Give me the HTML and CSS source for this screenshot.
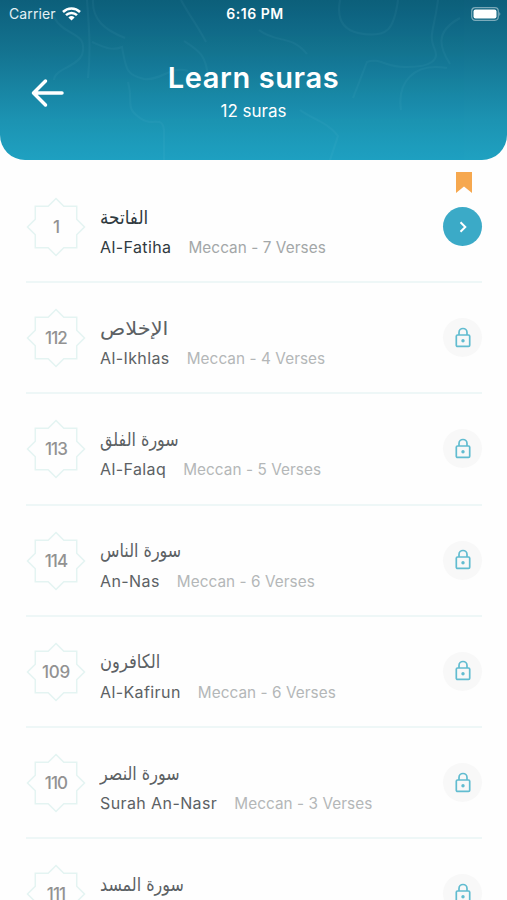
FILE: index.html
```html
<!DOCTYPE html>
<html lang="en">
<head>
<meta charset="utf-8">
<title>Learn suras</title>
<link rel="stylesheet" href="styles.css">
</head>
<body>
<svg class="defs" width="0" height="0" aria-hidden="true">
  <symbol id="star" viewBox="-30 -30 60 60"><path d="M0-28.5 7.8-20.7H20.7V-7.8L28.5 0 20.7 7.8V20.7H7.8L0 28.5-7.8 20.7H-20.7V7.8L-28.5 0-20.7-7.8V-20.7H-7.8Z" fill="none" stroke="currentColor" stroke-width="1.5"/></symbol>
  <symbol id="lock" viewBox="0 0 18 22"><path d="M5 8V5.500a4 4 0 0 1 8 0V8" fill="none" stroke="currentColor" stroke-width="1.7"/><rect x="2.300" y="8" width="13.400" height="11.400" rx="1.200" fill="none" stroke="currentColor" stroke-width="1.700"/><circle cx="9" cy="13.700" r="1.700" fill="currentColor"/></symbol>
</svg>
<header class="header">
  <svg class="pattern" viewBox="0 0 507 160" aria-hidden="true">
    <g fill="none" stroke="#8ed5e2" stroke-width="2">
      <path d="M93 0C92 20 105 30 125 38M54 17c10 20 35 14 28 38-5 12-28 14-28 25M87 0c2 28 4 48 1 78M92 42c14 6 20 9 30 5 4 22 4 28 22 32 18 2 26-14 44-8M181 0c8 15 18 28 25 42M184 41c14 9 23 14 24 38M128 82c6 20-4 25 12 36 12 10 22-4 24 12v30M340 0c-3 16 0 29 18 33 30 6 36-4 40-33M438 0c-4 32-10 34-3 50 4 10-4 17-28 17-20 1-28-10-40-5l-14 36M447 68c-34-6-50 15-46 42M300 110c10 8 28 12 38 26l-8 24M259 30c18 14 32 4 48 24M460 18c-26 14-20 30-10 46"/>
    </g>
  </svg>
  <div class="status">
    <div class="carrier"><span>Carrier</span>
      <svg width="19" height="14" viewBox="0 0 19 14"><g fill="none" stroke="#fff" stroke-width="2.500"><path d="M1 5a12.200 12.200 0 0 1 17 0M4 8.200a7.900 7.900 0 0 1 11 0"/></g><path d="M6.400 10.500a4.500 4.500 0 0 1 6.200 0L9.500 13.500Z" fill="#fff"/></svg>
    </div>
    <span class="clock">6:16 PM</span>
    <svg class="battery" width="31" height="14" viewBox="0 0 31 14"><rect x="1.700" y=".7" width="26.600" height="12.600" rx="3.500" fill="none" stroke="#fff" stroke-opacity=".45" stroke-width="1.200"/><rect x="3.500" y="2.500" width="23" height="9" rx="2" fill="#fff"/><path d="M29.300 5q2 2 0 4Z" fill="#fff" fill-opacity=".5"/></svg>
  </div>
  <div class="titlebar">
    <svg class="back" width="34" height="30" viewBox="0 0 34 30"><path d="M31 15H2.500M14.500 3 2.500 15 14.500 27" fill="none" stroke="#fff" stroke-width="3.500" stroke-linecap="round" stroke-linejoin="round"/></svg>
    <div class="titles"><h1>Learn suras</h1><p>12 suras</p></div>
  </div>
</header>
<main class="list">
  <article class="row open">
    <div class="badge"><svg><use href="#star"/></svg><span>1</span></div>
    <div class="info"><div class="arabic a1" lang="ar" dir="rtl">الفاتحة</div><div class="line"><span class="name">Al-Fatiha</span><span class="meta">Meccan - 7 Verses</span></div></div>
    <div class="action"><svg class="mark" width="16" height="21" viewBox="0 0 16 21"><path d="M0 0H16V21L8 14.500 0 21Z" fill="#f6a84f"/></svg><svg width="10" height="14" viewBox="0 0 10 14"><path d="M2.500 2.200 7.300 7 2.500 11.800" fill="none" stroke="#fff" stroke-width="2"/></svg></div>
  </article>
  <article class="row">
    <div class="badge"><svg><use href="#star"/></svg><span>112</span></div>
    <div class="info"><div class="arabic a2" lang="ar" dir="rtl">الإخلاص</div><div class="line"><span class="name">Al-Ikhlas</span><span class="meta">Meccan - 4 Verses</span></div></div>
    <div class="action"><svg width="18" height="22"><use href="#lock"/></svg></div>
  </article>
  <article class="row">
    <div class="badge"><svg><use href="#star"/></svg><span>113</span></div>
    <div class="info"><div class="arabic a3" lang="ar" dir="rtl">سورة الفلق</div><div class="line"><span class="name">Al-Falaq</span><span class="meta">Meccan - 5 Verses</span></div></div>
    <div class="action"><svg width="18" height="22"><use href="#lock"/></svg></div>
  </article>
  <article class="row">
    <div class="badge"><svg><use href="#star"/></svg><span>114</span></div>
    <div class="info"><div class="arabic a4" lang="ar" dir="rtl">سورة الناس</div><div class="line"><span class="name">An-Nas</span><span class="meta">Meccan - 6 Verses</span></div></div>
    <div class="action"><svg width="18" height="22"><use href="#lock"/></svg></div>
  </article>
  <article class="row">
    <div class="badge"><svg><use href="#star"/></svg><span class="wide">109</span></div>
    <div class="info"><div class="arabic a5" lang="ar" dir="rtl">الكافرون</div><div class="line"><span class="name">Al-Kafirun</span><span class="meta">Meccan - 6 Verses</span></div></div>
    <div class="action"><svg width="18" height="22"><use href="#lock"/></svg></div>
  </article>
  <article class="row">
    <div class="badge"><svg><use href="#star"/></svg><span>110</span></div>
    <div class="info"><div class="arabic a6" lang="ar" dir="rtl">سورة النصر</div><div class="line"><span class="name">Surah An-Nasr</span><span class="meta">Meccan - 3 Verses</span></div></div>
    <div class="action"><svg width="18" height="22"><use href="#lock"/></svg></div>
  </article>
  <article class="row">
    <div class="badge"><svg><use href="#star"/></svg><span>111</span></div>
    <div class="info"><div class="arabic a7" lang="ar" dir="rtl">سورة المسد</div></div>
    <div class="action"><svg width="18" height="22"><use href="#lock"/></svg></div>
  </article>
</main>
</body>
</html>
```
FILE: styles.css
```css
* { box-sizing: border-box; }
body { margin: 0; height: 900px; overflow: hidden; background: #fefefe; font-family: Inter, "Liberation Sans", sans-serif; }
.defs { position: absolute; }
svg { display: block; flex: none; }
.header { position: relative; height: 160px; overflow: hidden; border-radius: 0 0 25px 25px; background: linear-gradient(#0d5f7b, #147592 35%, #1c93b2 75%, #1fa1c1); color: #fff; }
.pattern { position: absolute; inset: 0; opacity: .05; }
.status { position: relative; display: grid; grid-template-columns: 1fr auto 1fr; align-items: center; height: 27px; padding: 0 6px 0 9px; }
.carrier { display: flex; align-items: center; gap: 6px; color: #e4f0f4; font-size: 14px; letter-spacing: .1px; }
.clock { font-weight: 600; font-size: 14px; letter-spacing: .5px; }
.battery { justify-self: end; }
.titlebar { position: relative; display: grid; grid-template-columns: 1fr auto 1fr; align-items: start; padding-top: 32px; }
.back { margin: 19px 0 0 31px; }
.titles { text-align: center; }
h1 { margin: 0; font-size: 29px; line-height: 38px; font-weight: 600; letter-spacing: .6px; }
.titles p { margin: 2px 0 0; font-size: 17px; line-height: 24px; }
.list { padding: 12px 25px 0 26px; }
.row { display: flex; align-items: center; height: 111.2px; border-bottom: 2px solid #eef7f7; color: #5c6164; }
.open { color: #303a3f; }
.badge { display: grid; place-items: center; width: 60px; height: 60px; margin-top: 1px; color: #e4f4f2; }
.badge > * { grid-area: 1 / 1; }
.badge svg { width: 60px; height: 60px; }
.badge span { color: #929292; font-size: 17px; font-weight: 500; letter-spacing: -.9px; }
.badge .wide { letter-spacing: -.2px; }
.info { flex: 1; height: 64px; margin: 12px 0 0 14px; }
.arabic { width: max-content; height: 34.500px; line-height: 32px; font-family: "DejaVu Sans", sans-serif; font-size: 19px; transform-origin: left center; }
.a1 { transform: scaleX(.89); }
.a2 { transform: scaleX(1.1); }
.a3, .a4, .a6, .a7 { transform: scaleX(.84); }
.a5 { transform: scaleX(.86); }
.line { display: flex; align-items: baseline; gap: 17px; height: 24px; line-height: 24px; }
.name { font-size: 16px; font-weight: 400; letter-spacing: .4px; }
.meta { color: #b4b7b8; font-size: 15.3px; letter-spacing: .07px; }
.open .meta { color: #a3a7a8; }
.action { position: relative; display: grid; place-items: center; width: 39px; height: 39px; border-radius: 50%; background: #f8f8f8; color: #61bcd0; }
.open .action { background: #3baac7; }
.mark { position: absolute; left: 13px; top: -35.500px; }
```
